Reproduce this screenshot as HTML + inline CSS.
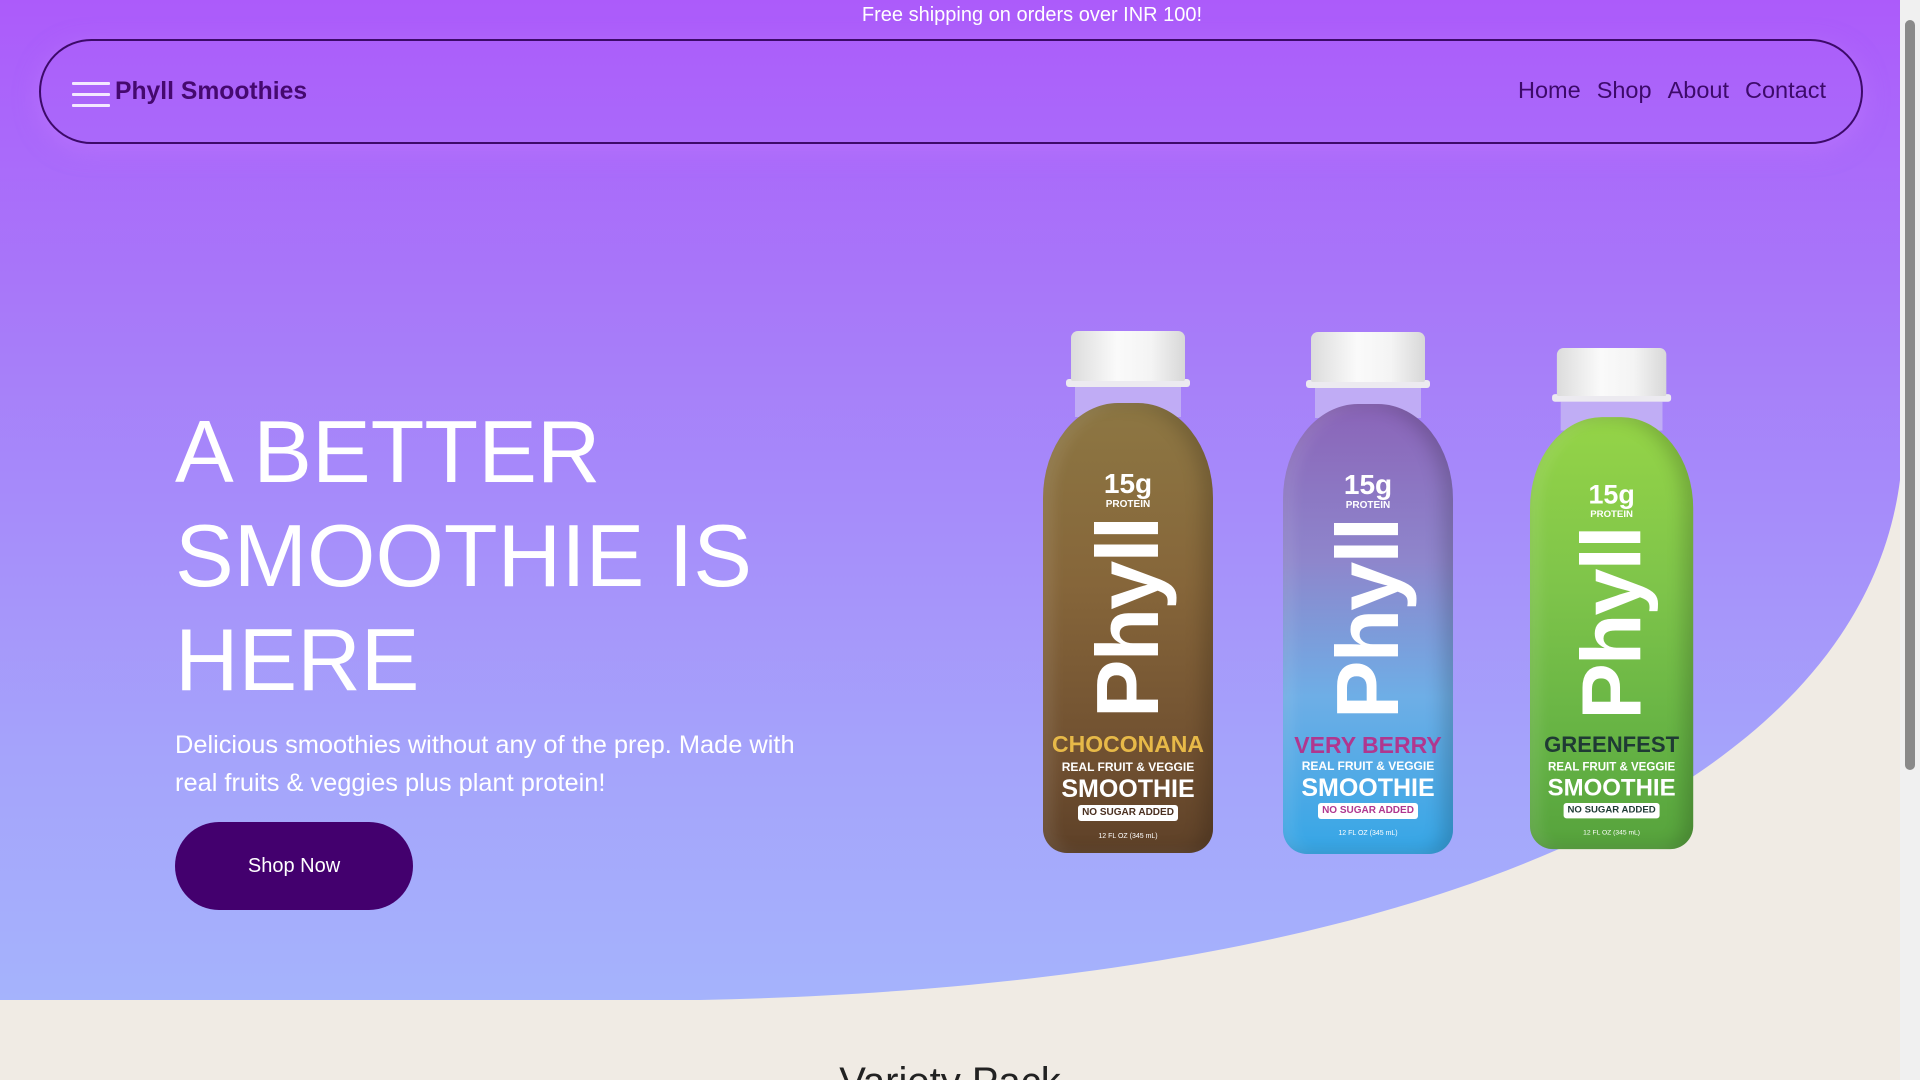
<!DOCTYPE html>
<html><head><meta charset="utf-8"><style>
*{margin:0;padding:0;box-sizing:border-box}
html,body{width:1920px;height:1080px;overflow:hidden;font-family:"Liberation Sans",Arial,sans-serif}
body{background:#f0ebe4;position:relative}
.hero{position:absolute;left:0;top:0;width:1900px;height:1000px;background:linear-gradient(180deg,#ac5bfa 0%,#a77df9 35%,#a5a3fb 75%,#a5b3fc 100%);overflow:hidden}
.curve{position:absolute;left:0;top:0}
.banner{position:absolute;top:3px;left:832px;width:400px;text-align:center;color:#fff;font-size:20px;line-height:24px}
.nav{position:absolute;left:39px;top:39px;width:1824px;height:105px;border:2px solid #3d0a6a;border-radius:53px;box-shadow:0 6px 24px rgba(190,120,255,.6)}
.burger{position:absolute;left:31px;top:41px;width:38px}
.burger i{display:block;height:3px;background:#f3e8ff;margin-bottom:8px;border-radius:1px}
.logo{position:absolute;left:74px;top:37px;font-size:24.7px;font-weight:bold;color:#45096f}
.links{position:absolute;right:35px;top:36px;font-size:23.5px;color:#3d0a6a}
.links span{margin-left:16px}
h1{position:absolute;left:175px;top:400px;font-weight:normal;color:#fff;font-size:88px;line-height:104px;width:700px}
.p{position:absolute;left:175px;top:726px;color:#fff;font-size:25.4px;line-height:38px;width:640px}
.btn{position:absolute;left:175px;top:822px;width:238px;height:88px;border-radius:44px;background:#43006e;color:#fff;font-size:20px;text-align:center;line-height:88px}
.vp{position:absolute;top:1060px;left:0;width:1900px;text-align:center;font-size:40px;color:#222}
.sb{position:absolute;right:0;top:0;width:20px;height:1080px;background:#f0f0f0}
.sb i{position:absolute;left:5px;top:20px;width:10px;height:750px;background:#8a8a8a;border-radius:5px}
.b{position:absolute;width:170px;height:522px}
.cap{position:absolute;left:28px;top:0;width:114px;height:50px;background:linear-gradient(90deg,#dcdcdc,#fafafa 40%,#f4f4f4 70%,#d8d8d8);border-radius:7px 7px 2px 2px}
.fl{position:absolute;left:23px;top:48px;width:124px;height:8px;background:#eceaf0;border-radius:3px}
.neck{position:absolute;left:32px;top:56px;width:106px;height:30px;background:rgba(225,225,240,.45)}
.body{position:absolute;left:0;top:72px;width:170px;height:450px;border-radius:75px 75px 24px 24px/95px 95px 24px 24px;box-shadow:inset -10px 0 18px rgba(0,0,0,.18),inset 10px 0 14px rgba(255,255,255,.1)}
.t{position:absolute;left:0;width:170px;text-align:center;color:#fff;font-weight:bold}
.ph{position:absolute;left:85px;top:287px;transform:translate(-50%,-50%) rotate(-90deg);font-size:88px;font-weight:900;color:#fff;letter-spacing:-2px;line-height:1}
.ns{position:absolute;left:35px;top:474px;width:100px;height:16px;background:#fff;border-radius:3px;font-size:10px;font-weight:bold;text-align:center;line-height:16px}
</style></head><body>
<div class="hero">
<svg class="curve" width="1900" height="1000"><path d="M1900,480 C1860,790 1420,985 700,1000 L1900,1000 Z" fill="#f0ebe4"/></svg>
<div class="banner">Free shipping on orders over INR 100!</div>
<div class="nav"><div class="burger"><i></i><i></i><i></i></div><div class="logo">Phyll Smoothies</div>
<div class="links"><span>Home</span><span>Shop</span><span>About</span><span>Contact</span></div></div>
<h1>A BETTER SMOOTHIE IS HERE</h1>
<div class="p">Delicious smoothies without any of the prep. Made with real fruits &amp; veggies plus plant protein!</div>
<div class="btn">Shop Now</div>

<div class="b" style="left:1043px;top:331px">
<div class="neck"></div><div class="body" style="background:linear-gradient(180deg,#8d7743 0%,#86663a 40%,#6f4f30 80%,#5e4128 100%)"></div>
<div class="fl"></div><div class="cap"></div>
<div class="t" style="top:137px;font-size:28px">15g</div><div class="t" style="top:168px;font-size:10px">PROTEIN</div>
<div class="ph">Phyll</div>
<div class="t" style="top:400px;font-size:23px;color:#e7b948">CHOCONANA</div>
<div class="t" style="top:429px;font-size:12px">REAL FRUIT &amp; VEGGIE</div>
<div class="t" style="top:444px;font-size:25px">SMOOTHIE</div>
<div class="ns" style="color:#4a3020">NO SUGAR ADDED</div>
<div class="t" style="top:502px;font-size:7px;font-weight:normal">12 FL OZ (345 mL)</div>
</div>

<div class="b" style="left:1283px;top:332px">
<div class="neck"></div><div class="body" style="background:linear-gradient(180deg,#8a64b8 0%,#8e86cc 35%,#6eaee6 65%,#35a6e6 100%)"></div>
<div class="fl"></div><div class="cap"></div>
<div class="t" style="top:137px;font-size:28px">15g</div><div class="t" style="top:168px;font-size:10px">PROTEIN</div>
<div class="ph">Phyll</div>
<div class="t" style="top:400px;font-size:23px;color:#b0378f">VERY BERRY</div>
<div class="t" style="top:427px;font-size:12px">REAL FRUIT &amp; VEGGIE</div>
<div class="t" style="top:442px;font-size:25px">SMOOTHIE</div>
<div class="ns" style="top:471px;color:#b0378f">NO SUGAR ADDED</div>
<div class="t" style="top:498px;font-size:7px;font-weight:normal">12 FL OZ (345 mL)</div>
</div>

<div class="b" style="left:1530px;top:348px;transform:scale(.96);transform-origin:0 0">
<div class="neck"></div><div class="body" style="background:linear-gradient(180deg,#95d447 0%,#7ec44a 40%,#62b043 80%,#56a23c 100%)"></div>
<div class="fl"></div><div class="cap"></div>
<div class="t" style="top:137px;font-size:28px">15g</div><div class="t" style="top:168px;font-size:10px">PROTEIN</div>
<div class="ph">Phyll</div>
<div class="t" style="top:400px;font-size:23px;color:#1f3a34">GREENFEST</div>
<div class="t" style="top:429px;font-size:12px">REAL FRUIT &amp; VEGGIE</div>
<div class="t" style="top:444px;font-size:25px">SMOOTHIE</div>
<div class="ns" style="color:#1f3a34">NO SUGAR ADDED</div>
<div class="t" style="top:502px;font-size:7px;font-weight:normal">12 FL OZ (345 mL)</div>
</div>
</div>
<div class="vp">Variety Pack</div>
<div class="sb"><i></i></div>
</body></html>
